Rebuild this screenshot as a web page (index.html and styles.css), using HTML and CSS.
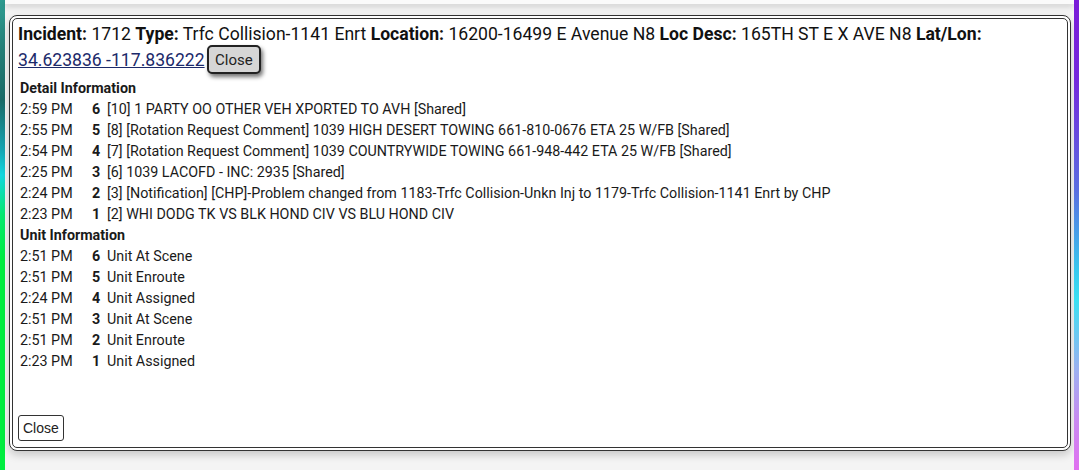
FILE: index.html
```html
<!DOCTYPE html>
<html>
<head>
<meta charset="utf-8">
<link rel="stylesheet" href="styles.css">
</head>
<body>
<div class="frame">
  <div class="strip strip-left"></div>
  <div class="main">
    <div class="topbar"></div>
    <div class="dialog">
      <div class="header">
        <b>Incident:</b> 1712 <b>Type:</b> Trfc Collision-1141 Enrt <b>Location:</b> 16200-16499 E Avenue N8 <b>Loc Desc:</b> 165TH ST E X AVE N8 <b>Lat/Lon:</b>
        <a class="link" href="#">34.623836 -117.836222</a> <button class="btn-top">Close</button>
      </div>
      <div class="section">
        <div class="sec-title">Detail Information</div>
        <table class="rows">
          <tr><td class="t">2:59 PM</td><td class="n">6</td><td>[10] 1 PARTY OO OTHER VEH XPORTED TO AVH [Shared]</td></tr>
          <tr><td class="t">2:55 PM</td><td class="n">5</td><td>[8] [Rotation Request Comment] 1039 HIGH DESERT TOWING 661-810-0676 ETA 25 W/FB [Shared]</td></tr>
          <tr><td class="t">2:54 PM</td><td class="n">4</td><td>[7] [Rotation Request Comment] 1039 COUNTRYWIDE TOWING 661-948-442 ETA 25 W/FB [Shared]</td></tr>
          <tr><td class="t">2:25 PM</td><td class="n">3</td><td>[6] 1039 LACOFD - INC: 2935 [Shared]</td></tr>
          <tr><td class="t">2:24 PM</td><td class="n">2</td><td>[3] [Notification] [CHP]-Problem changed from 1183-Trfc Collision-Unkn Inj to 1179-Trfc Collision-1141 Enrt by CHP</td></tr>
          <tr><td class="t">2:23 PM</td><td class="n">1</td><td>[2] WHI DODG TK VS BLK HOND CIV VS BLU HOND CIV</td></tr>
        </table>
        <div class="sec-title">Unit Information</div>
        <table class="rows">
          <tr><td class="t">2:51 PM</td><td class="n">6</td><td>Unit At Scene</td></tr>
          <tr><td class="t">2:51 PM</td><td class="n">5</td><td>Unit Enroute</td></tr>
          <tr><td class="t">2:24 PM</td><td class="n">4</td><td>Unit Assigned</td></tr>
          <tr><td class="t">2:51 PM</td><td class="n">3</td><td>Unit At Scene</td></tr>
          <tr><td class="t">2:51 PM</td><td class="n">2</td><td>Unit Enroute</td></tr>
          <tr><td class="t">2:23 PM</td><td class="n">1</td><td>Unit Assigned</td></tr>
        </table>
      </div>
      <div class="footer"><button class="btn-bottom">Close</button></div>
    </div>
  </div>
  <div class="strip strip-right"></div>
</div>
</body>
</html>
```
FILE: styles.css
```css
html, body {
  margin: 0;
  padding: 0;
}
body {
  background: #f4f4f4;
  font-family: Roboto, "Liberation Sans", sans-serif;
  color: #1a1a1a;
  overflow: hidden;
}
.frame {
  display: flex;
  height: 470px;
  width: 1079px;
}
.strip {
  width: 5px;
  flex: none;
}
.strip-left {
  background: linear-gradient(to bottom, #2f9d92 0px, #257f78 50px, #1a6a67 100px, #16a6b4 150px, #12d8e0 175px, #06ea70 215px, #00ee40 260px, #00ee40 470px);
}
.strip-right {
  width: 5px;
  margin-left: 3px;
  background: linear-gradient(to bottom, #7a1cd8 0px, #7428dc 80px, #5a6ee0 190px, #38c8ee 270px, #3ae0f2 300px, #9cb0f0 370px, #c88af0 420px, #e070f0 470px);
}
.main {
  flex: 1;
  display: flex;
  flex-direction: column;
  padding-left: 4px;
}
.topbar {
  height: 4px;
  background: #fafafa;
  box-shadow: 0 2px 6px rgba(0, 0, 0, 0.22);
  margin-left: -4px;
  margin-right: -3px;
}
.dialog {
  margin-top: 11px;
  height: 419px;
  border: 4px double #333;
  border-radius: 8px;
  background: #fff;
  box-shadow: 0 4px 8px rgba(0, 0, 0, 0.18);
  display: flex;
  flex-direction: column;
  padding: 3px 5px 6px 5px;
}
.header {
  font-size: 17.6px;
  line-height: 25px;
  color: #111;
}
.header b {
  font-weight: 700;
}
.link {
  color: #1c2a6a;
  text-decoration: underline;
  white-space: nowrap;
}
.btn-top {
  font-family: Roboto, "Liberation Sans", sans-serif;
  font-size: 15px;
  color: #222;
  background: #d6d6d6;
  border: 2px solid #222;
  border-radius: 5px;
  padding: 3px 6px;
  height: 29px;
  box-shadow: 2px 3px 4px rgba(0, 0, 0, 0.55);
  vertical-align: middle;
  margin-left: -2px;
  position: relative;
  top: -2px;
}
.section {
  padding-left: 2px;
  margin-top: 2px;
  font-size: 14.3px;
}
.sec-title {
  font-weight: 700;
  line-height: 21px;
}
.rows {
  border-collapse: collapse;
}
.rows td {
  padding: 0;
  line-height: 21px;
  white-space: nowrap;
}
.rows td.t {
  width: 72px;
}
.rows td.n {
  font-weight: 700;
  width: 15px;
}
.footer {
  margin-top: auto;
}
.btn-bottom {
  font-family: "Liberation Sans", Arial, sans-serif;
  font-size: 14px;
  color: #222;
  background: #fff;
  border: 1px solid #333;
  border-radius: 3px;
  padding: 0 4px;
  height: 26px;
  margin-left: 0;
}
```
